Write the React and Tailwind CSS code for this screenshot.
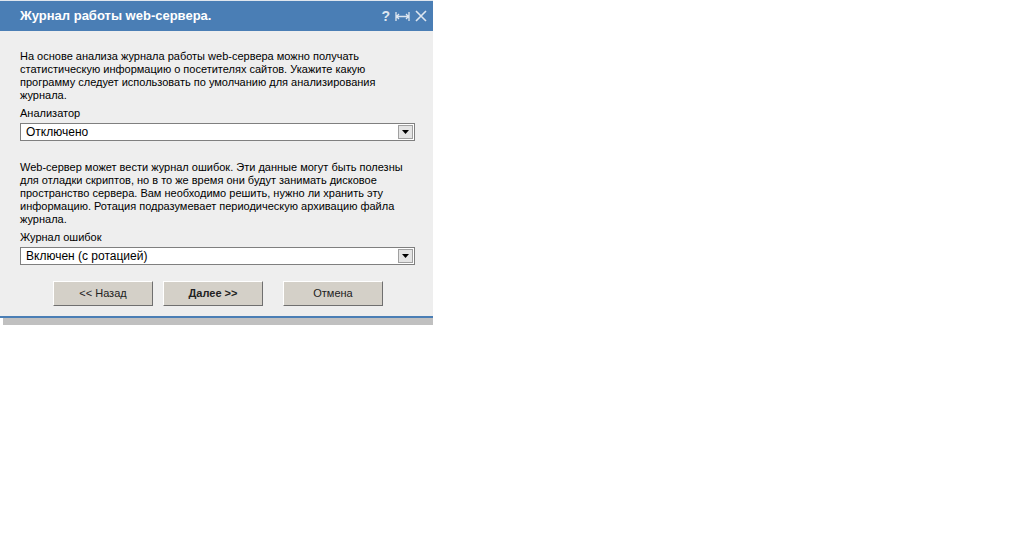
const font = { fontFamily: '"Liberation Sans", Arial, sans-serif' };

const Select = ({ value }) => (
  <div className="flex h-[18px] w-[395px] items-stretch border border-[#7f7f7f] bg-white">
    <div className="flex-1 pl-[5px] text-[12px] leading-[16px] text-black">{value}</div>
    <div className="m-[1px] flex w-[15px] items-center justify-center border border-[#a0a0a0] bg-[#e4e4e4]">
      <svg width="7" height="4" viewBox="0 0 7 4">
        <path d="M0 0h7L3.5 4z" fill="#000" />
      </svg>
    </div>
  </div>
);

const Button = ({ children, bold, className = "" }) => (
  <button
    className={
      "h-[25px] w-[100px] border border-t-[#ffffff] border-l-[#ffffff] border-r-[#6f6f6f] border-b-[#6f6f6f] bg-[#d4d0c8] text-[11px] text-[#222] " +
      (bold ? "font-bold " : "") +
      className
    }
  >
    {children}
  </button>
);

export default function App() {
  return (
    <div className="h-[557px] w-[1015px] bg-white" style={font}>
      <div className="flex w-[433px] flex-col">
        <div className="h-[1px] bg-[#dfe6ee]" />
        <div className="flex h-[30px] items-center justify-between bg-[#4a7eb5] pl-[20px] pr-[6px]">
          <span className="text-[13px] font-bold text-white">Журнал работы web-сервера.</span>
          <div className="flex items-center gap-[5px] text-[#dde6f0]">
            <span className="text-[14px] font-bold leading-none">?</span>
            <svg width="15" height="11" viewBox="0 0 15 11" fill="none" stroke="#dde6f0" strokeWidth="1.3">
              <path d="M1 1v9M14 1v9M1 5.5h13M4 3l-2.5 2.5L4 8M11 3l2.5 2.5L11 8" />
            </svg>
            <svg width="12" height="12" viewBox="0 0 12 12" fill="none" stroke="#dde6f0" strokeWidth="1.6">
              <path d="M1 1l10 10M11 1L1 11" />
            </svg>
          </div>
        </div>
        <div className="flex flex-col bg-[#eeeeee] px-[20px] pt-[19px] text-[11px] leading-[13px] text-black">
          <p className="w-[395px]">
            На основе анализа журнала работы web-сервера можно получать статистическую информацию о посетителях сайтов. Укажите какую программу следует использовать по умолчанию для анализирования журнала.
          </p>
          <div className="mt-[5px]">Анализатор</div>
          <div className="mt-[3px]">
            <Select value="Отключено" />
          </div>
          <p className="mt-[20px] w-[395px]">
            Web-сервер может вести журнал ошибок. Эти данные могут быть полезны для отладки скриптов, но в то же время они будут занимать дисковое пространство сервера. Вам необходимо решить, нужно ли хранить эту информацию. Ротация подразумевает периодическую архивацию файла журнала.
          </p>
          <div className="mt-[5px]">Журнал ошибок</div>
          <div className="mt-[3px]">
            <Select value="Включен (с ротацией)" />
          </div>
          <div className="mt-[16px] flex gap-[10px] pb-[10px] pl-[33px]">
            <Button>&lt;&lt; Назад</Button>
            <Button bold className="mr-[10px]">Далее &gt;&gt;</Button>
            <Button>Отмена</Button>
          </div>
        </div>
        <div className="h-[2px] bg-[#4a7eb5]" />
        <div className="ml-[3px] h-[7px] bg-[#c0c0c0]" />
      </div>
    </div>
  );
}
